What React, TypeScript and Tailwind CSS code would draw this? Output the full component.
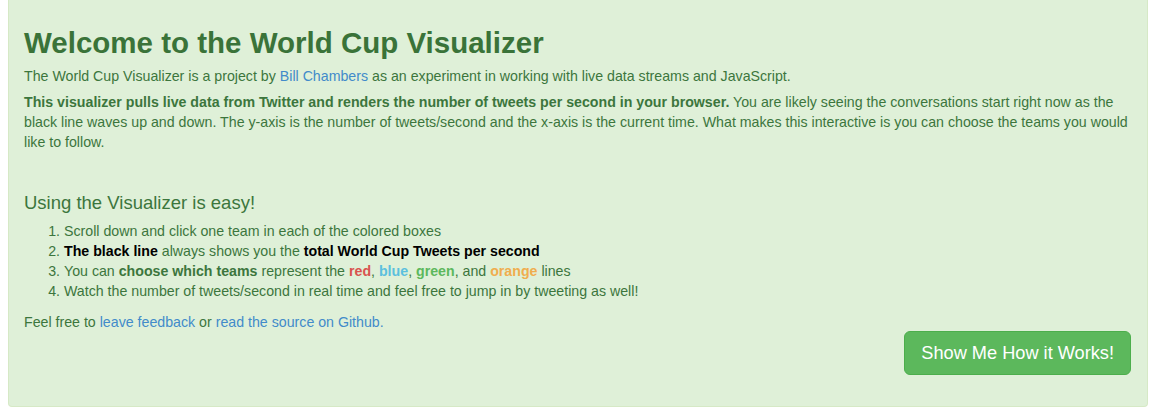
const steps = [
  <>Scroll down and click one team in each of the colored boxes</>,
  <>
    <strong className="text-black">The black line</strong> always shows you the{" "}
    <strong className="text-black">total World Cup Tweets per second</strong>
  </>,
  <>
    You can <strong>choose which teams</strong> represent the <strong className="text-[#d9534f]">red</strong>,{" "}
    <strong className="text-[#5bc0de]">blue</strong>, <strong className="text-[#5cb85c]">green</strong>, and{" "}
    <strong className="text-[#f0ad4e]">orange</strong> lines
  </>,
  <>Watch the number of tweets/second in real time and feel free to jump in by tweeting as well!</>,
];

export default function App() {
  return (
    <div className="w-[1156px] h-[419px] bg-white px-2 font-['Liberation_Sans',Arial,sans-serif]">
      <div className="bg-[#dff0d8] border border-t-0 border-[#d6e9c6] rounded-b-[4px] px-[15px] pt-[27px] pb-[31px] text-[#3c763d]">
        <h1 className="text-[29.5px] leading-[32px] font-bold text-[#3a7339]">
          Welcome to the World Cup Visualizer
        </h1>
        <p className="mt-[7px] text-[14.2px] leading-[20px]">
          The World Cup Visualizer is a project by{" "}
          <a className="text-[#428bca]">Bill Chambers</a> as an experiment in working with live data streams and
          JavaScript.
        </p>
        <p className="mt-[6px] text-[14.2px] leading-[20px]">
          <strong>
            This visualizer pulls live data from Twitter and renders the number of tweets per second in your browser.
          </strong>{" "}
          You are likely seeing the conversations start right now as the black line waves up and down. The y-axis is
          the number of tweets/second and the x-axis is the current time. What makes this interactive is you can
          choose the teams you would like to follow.
        </p>

        <h4 className="mt-[41px] text-[18.5px] leading-[20px]">Using the Visualizer is easy!</h4>
        <ol className="mt-[8px] text-[14.2px] leading-[20px]">
          {steps.map((s, i) => (
            <li key={i} className="flex">
              <span className="w-[40px] shrink-0 text-right pr-[4px]">{i + 1}.</span>
              <span>{s}</span>
            </li>
          ))}
        </ol>

        <p className="mt-[11px] text-[14.2px] leading-[20px]">
          Feel free to <a className="text-[#428bca]">leave feedback</a> or{" "}
          <a className="text-[#428bca]">read the source on Github.</a>
        </p>
        <div className="flex justify-end -mt-[1px]">
          <button className="h-[44px] px-[16px] mr-[1px] rounded-[6px] bg-[#5cb85c] border border-[#4cae4c] text-white text-[18.2px] leading-[24px]">
            Show Me How it Works!
          </button>
        </div>
      </div>
    </div>
  );
}
